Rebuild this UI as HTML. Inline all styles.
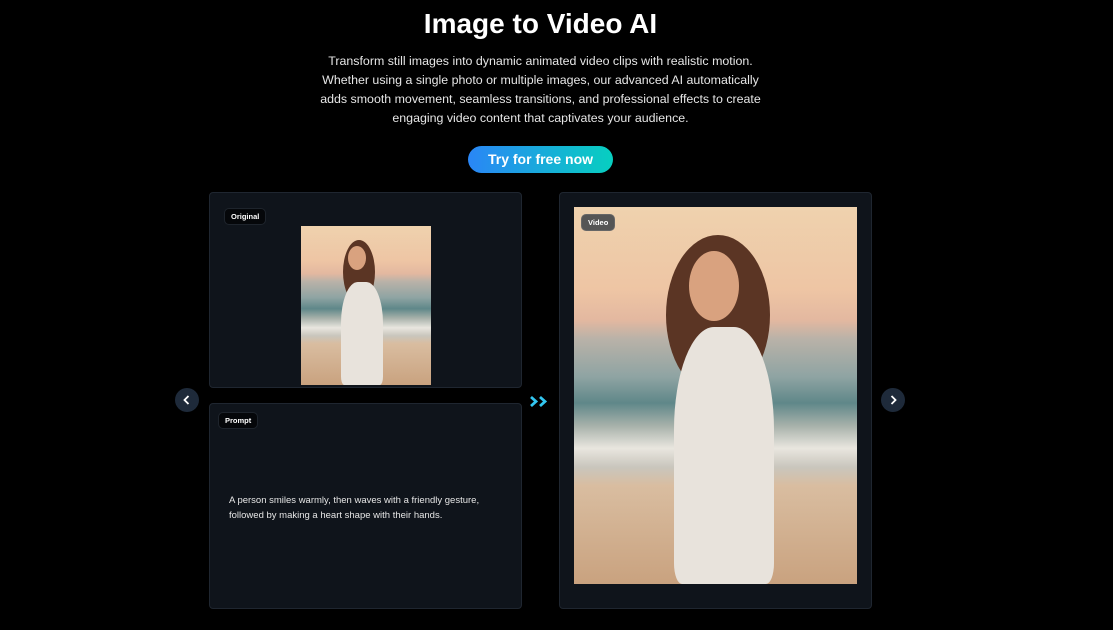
<!DOCTYPE html>
<html><head><style>
*{margin:0;padding:0;box-sizing:border-box}
body{width:1113px;height:630px;background:#000;font-family:"Liberation Sans",sans-serif;color:#fff;position:relative;overflow:hidden}
h1{position:absolute;top:8px;left:0;width:1081px;text-align:center;font-size:28px;font-weight:bold}
.desc{position:absolute;top:52px;left:0;width:1081px;text-align:center;font-size:12.4px;line-height:19px;color:#e6e6e6}
.btn{position:absolute;left:468px;top:146px;width:145px;height:27px;border-radius:14px;background:linear-gradient(90deg,#2a86f6,#07cfc0);text-align:center;font-weight:bold;font-size:14px;line-height:27px}
.card{position:absolute;background:#0f141b;border:1px solid #1f2630;border-radius:4px}
.tag{position:absolute;background:#05070a;border:1px solid #1e242c;border-radius:5px;font-size:7.5px;font-weight:bold;padding:3px 6px}
.photo{position:absolute;background:linear-gradient(180deg,#efd2ae 0%,#eec5a4 22%,#e3b8a0 30%,#b9b2a8 35%,#8fa4a3 45%,#5f8789 52%,#a7b1aa 58%,#e9e6df 64%,#c9c6bd 69%,#d9bda0 74%,#c9a27f 100%);overflow:hidden}
.fig{position:absolute;background:#e8e3dc;border-radius:40% 40% 8% 8%}
.hair{position:absolute;background:#5b3524;border-radius:50%}
.face{position:absolute;background:#d9a27f;border-radius:50%}
.nav{position:absolute;width:24px;height:24px;border-radius:50%;background:#1e2a3a}
</style></head><body>
<h1>Image to Video AI</h1>
<div class="desc">Transform still images into dynamic animated video clips with realistic motion.<br>Whether using a single photo or multiple images, our advanced AI automatically<br>adds smooth movement, seamless transitions, and professional effects to create<br>engaging video content that captivates your audience.</div>
<div class="btn">Try for free now</div>

<div class="card" style="left:209px;top:192px;width:313px;height:196px">
<div class="tag" style="left:14px;top:15px">Original</div>
<div class="photo" style="left:91px;top:33px;width:130px;height:159px">
<div class="hair" style="left:42px;top:14px;width:32px;height:64px"></div>
<div class="face" style="left:47px;top:20px;width:18px;height:24px"></div>
<div class="fig" style="left:40px;top:56px;width:42px;height:103px"></div>
</div></div>

<div class="card" style="left:209px;top:403px;width:313px;height:206px">
<div class="tag" style="left:8px;top:8px">Prompt</div>
<div style="position:absolute;left:19px;top:89px;font-size:9.5px;line-height:15px;color:#e6e6e6">A person smiles warmly, then waves with a friendly gesture,<br>followed by making a heart shape with their hands.</div>
</div>

<svg style="position:absolute;left:529px;top:395px" width="26" height="13" viewBox="0 0 26 13"><path d="M2 2l5 4.5-5 4.5M11 2l5 4.5-5 4.5" stroke="#33c6f0" stroke-width="2.8" fill="none"/></svg>

<div class="card" style="left:559px;top:192px;width:313px;height:417px">
<div class="photo" style="left:14px;top:14px;width:283px;height:377px">
<div class="hair" style="left:92px;top:28px;width:104px;height:160px"></div>
<div class="face" style="left:115px;top:44px;width:50px;height:70px"></div>
<div class="fig" style="left:100px;top:120px;width:100px;height:257px"></div>
</div>
<div class="tag" style="left:21px;top:21px;background:#555;border-color:#666">Video</div>
</div>

<div class="nav" style="left:175px;top:388px"><svg width="24" height="24"><path d="M13.5 8l-4 4 4 4" stroke="#fff" stroke-width="1.8" fill="none"/></svg></div>
<div class="nav" style="left:881px;top:388px"><svg width="24" height="24"><path d="M10.5 8l4 4-4 4" stroke="#fff" stroke-width="1.8" fill="none"/></svg></div>
</body></html>
